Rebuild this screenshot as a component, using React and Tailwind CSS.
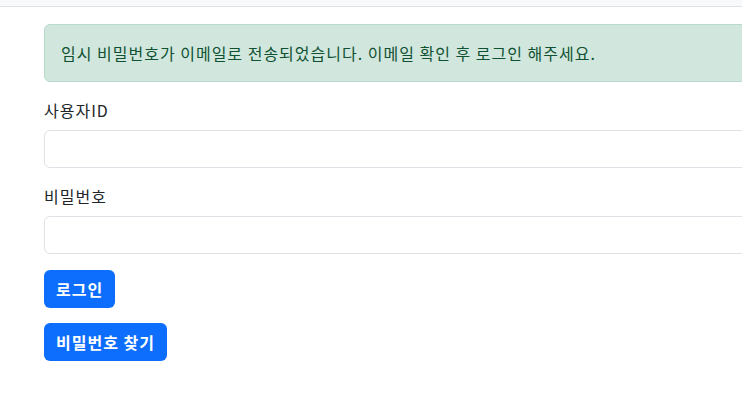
const fontStack = { fontFamily: '"Noto Sans CJK KR", "Noto Sans", sans-serif' };

export default function App() {
    return (
        <div className="w-full overflow-hidden bg-white min-h-[408px] tracking-[1px]" style={fontStack}>
            {/* top navbar edge */}
            <div className="h-[7px] bg-[#f8f9fa] border-b border-[#dee2e6]" />

            <div className="w-[1100px] pl-[44px] pt-[17px]">
                <div className="mb-4 rounded-[6px] border border-[#badbcc] bg-[#d1e7dd] p-4 text-base leading-6 text-[#0f5132]">
                    임시 비밀번호가 이메일로 전송되었습니다. 이메일 확인 후 로그인 해주세요.
                </div>

                <form onSubmit={(e) => e.preventDefault()}>
                    <div className="mb-4">
                        <label className="mb-2 block text-base leading-6 text-[#212529]">사용자ID</label>
                        <input
                            type="text"
                            className="block h-[38px] w-full rounded-[6px] border border-[#dee2e6] bg-white px-3 text-base outline-none"
                        />
                    </div>
                    <div className="mb-4">
                        <label className="mb-2 block text-base leading-6 text-[#212529]">비밀번호</label>
                        <input
                            type="password"
                            className="block h-[38px] w-full rounded-[6px] border border-[#dee2e6] bg-white px-3 text-base outline-none"
                        />
                    </div>
                    <button
                        type="submit"
                        className="block h-[38px] rounded-[6px] bg-[#0d6efd] px-3 text-base font-semibold leading-6 text-white"
                    >
                        로그인
                    </button>
                </form>

                <button
                    type="button"
                    className="mt-[15px] block h-[38px] rounded-[6px] bg-[#0d6efd] px-3 text-base font-semibold leading-6 text-white"
                >
                    비밀번호 찾기
                </button>
            </div>
        </div>
    );
}
